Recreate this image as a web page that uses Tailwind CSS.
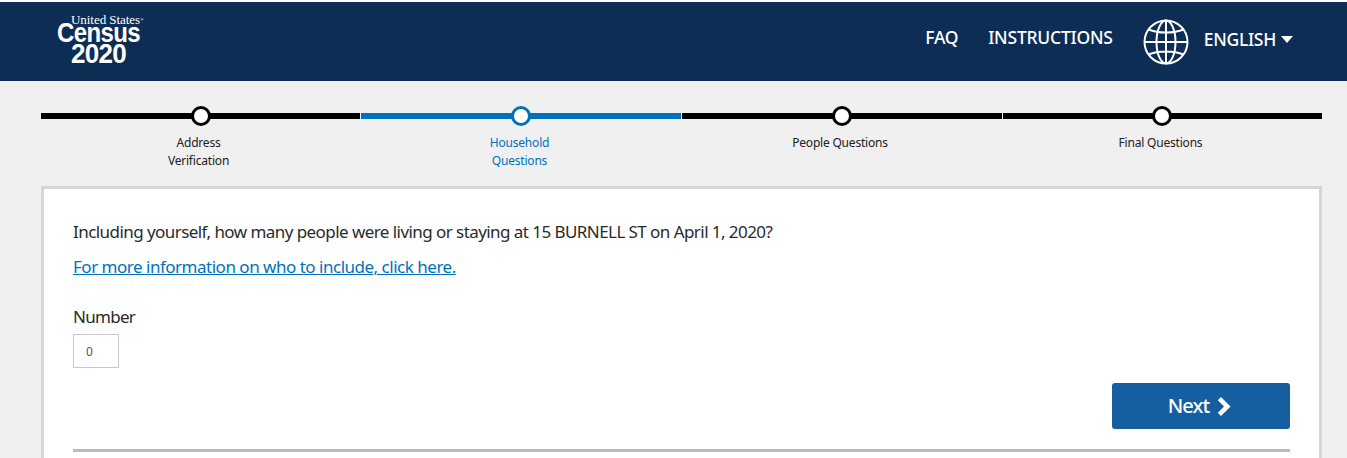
<!doctype html>
<html lang="en"><head><meta charset="utf-8"><title>Census 2020</title>
<script src="https://cdn.jsdelivr.net/npm/@tailwindcss/browser@4"></script></head>
<body class="h-[458px] overflow-hidden bg-[#f0f0f0] font-['Noto_Sans',sans-serif] text-[#212121]">
<div class="h-[2px] bg-white"></div>
<header class="h-[79px] bg-[#0d2d55] flex items-start text-white">
  <div class="ml-[56px] mt-[13px] w-[90px] flex flex-col items-start">
    <div class="h-[10px] ml-[15px] whitespace-nowrap font-['Liberation_Serif',serif] text-[13px] leading-[10px] tracking-[-0.05px]">United States<span class="text-[5px] align-top">®</span></div>
    <div class="h-[14px] mt-[1px] ml-[1px] font-['Liberation_Sans',sans-serif] font-bold text-[24px] leading-[14px] tracking-[-0.6px] scale-y-[1.12]">Census</div>
    <div class="h-[24px] mt-[1px] ml-[15px] font-['Liberation_Sans',sans-serif] font-bold text-[26px] leading-[24px] tracking-[-0.7px] scale-y-[1.08]">2020</div>
  </div>
  <nav class="ml-auto flex items-start mr-[54px]">
    <a class="mt-[23px] text-[17.5px] leading-[24px] font-medium tracking-[-0.3px]">FAQ</a>
    <a class="mt-[23px] ml-[30px] text-[17.5px] leading-[24px] font-medium tracking-[-0.22px]">INSTRUCTIONS</a>
    <svg class="mt-[17px] ml-[30px]" width="46" height="46" viewBox="0 0 46 46" fill="none" stroke="white" stroke-width="2">
      <circle cx="23" cy="23" r="21.5"/>
      <ellipse cx="23" cy="23" rx="9.5" ry="21.5"/>
      <path d="M23 1.5V44.5M5.5 10.5C15 14.5 31 14.5 40.500 10.500M5.500 35.500C15 31.500 31 31.500 40.500 35.500M1.500 23H44.500"/>
    </svg>
    <a class="mt-[25px] ml-[15px] text-[17.5px] leading-[24px] font-medium tracking-[-0.3px]">ENGLISH</a>
    <svg class="mt-[34px] ml-[5px]" width="12" height="7" viewBox="0 0 12 7" fill="white"><path d="M0 0H12L6 7Z"/></svg>
  </nav>
</header>
<main class="px-[41px] w-[1363px] max-w-none">
  <ol class="grid grid-cols-[319px_320px_320px_319px] gap-x-px w-[1281px] h-[105px]">
    <li class="relative pt-[32px]">
      <div class="h-[6px] bg-black"></div>
      <span class="absolute top-[25px] left-[150px] size-[20px] rounded-full bg-white border-[3px] border-black"></span>
      <p class="mt-[15px] pl-[115px] w-[200px] text-center text-[12px] leading-[18px] tracking-[-0.2px]">Address<br>Verification</p>
    </li>
    <li class="relative pt-[32px]">
      <div class="h-[6px] bg-[#0071bc]"></div>
      <span class="absolute top-[25px] left-[150px] size-[20px] rounded-full bg-white border-[3px] border-[#0071bc]"></span>
      <p class="mt-[15px] pl-[117px] w-[200px] text-center text-[12px] leading-[18px] tracking-[-0.2px] text-[#0071bc]">Household<br>Questions</p>
    </li>
    <li class="relative pt-[32px]">
      <div class="h-[6px] bg-black"></div>
      <span class="absolute top-[25px] left-[150px] size-[20px] rounded-full bg-white border-[3px] border-black"></span>
      <p class="mt-[15px] text-center pr-[4px] text-[12px] leading-[18px] tracking-[-0.2px]">People Questions</p>
    </li>
    <li class="relative pt-[32px]">
      <div class="h-[6px] bg-black"></div>
      <span class="absolute top-[25px] left-[149px] size-[20px] rounded-full bg-white border-[3px] border-black"></span>
      <p class="mt-[15px] text-center pr-[4px] text-[12px] leading-[18px] tracking-[-0.2px]">Final Questions</p>
    </li>
  </ol>
  <section class="w-[1281px] h-[400px] bg-white border-[3px] border-[#d6d6d7] px-[29px] pt-[30px]">
    <p class="text-[17px] leading-[26px] tracking-[-0.56px] text-[#2a2a2a]">Including yourself, how many people were living or staying at 15 BURNELL ST on April 1, 2020?</p>
    <a class="block mt-[9px] text-[17px] leading-[26px] tracking-[-0.49px] text-[#0071bc] underline">For more information on who to include, click here.</a>
    <label class="block mt-[24px] text-[17px] leading-[26px] tracking-[-0.7px] text-[#2a2a2a]">Number</label>
    <input class="block mt-[4px] w-[46px] h-[34px] border border-[#c8c8c8] pl-[12px] text-[12px] text-[#555] bg-white" value="0" aria-label="Number">
    <div class="flex justify-end mt-[15px]">
      <button class="w-[178px] h-[46px] pr-[2px] rounded-[3px] bg-[#155fa1] text-white text-[20px] font-medium tracking-[-0.9px] flex items-center justify-center gap-[8px]">Next
        <svg width="15" height="19" viewBox="0 0 15 19" fill="white"><path d="M4 0L13.5 9.5L4 19L0.8 15.8L7 9.5L0.8 3.2Z"/></svg>
      </button>
    </div>
    <div class="mt-[20px] h-[3px] bg-[#bbbbbb]"></div>
  </section>
</main>
</body></html>
